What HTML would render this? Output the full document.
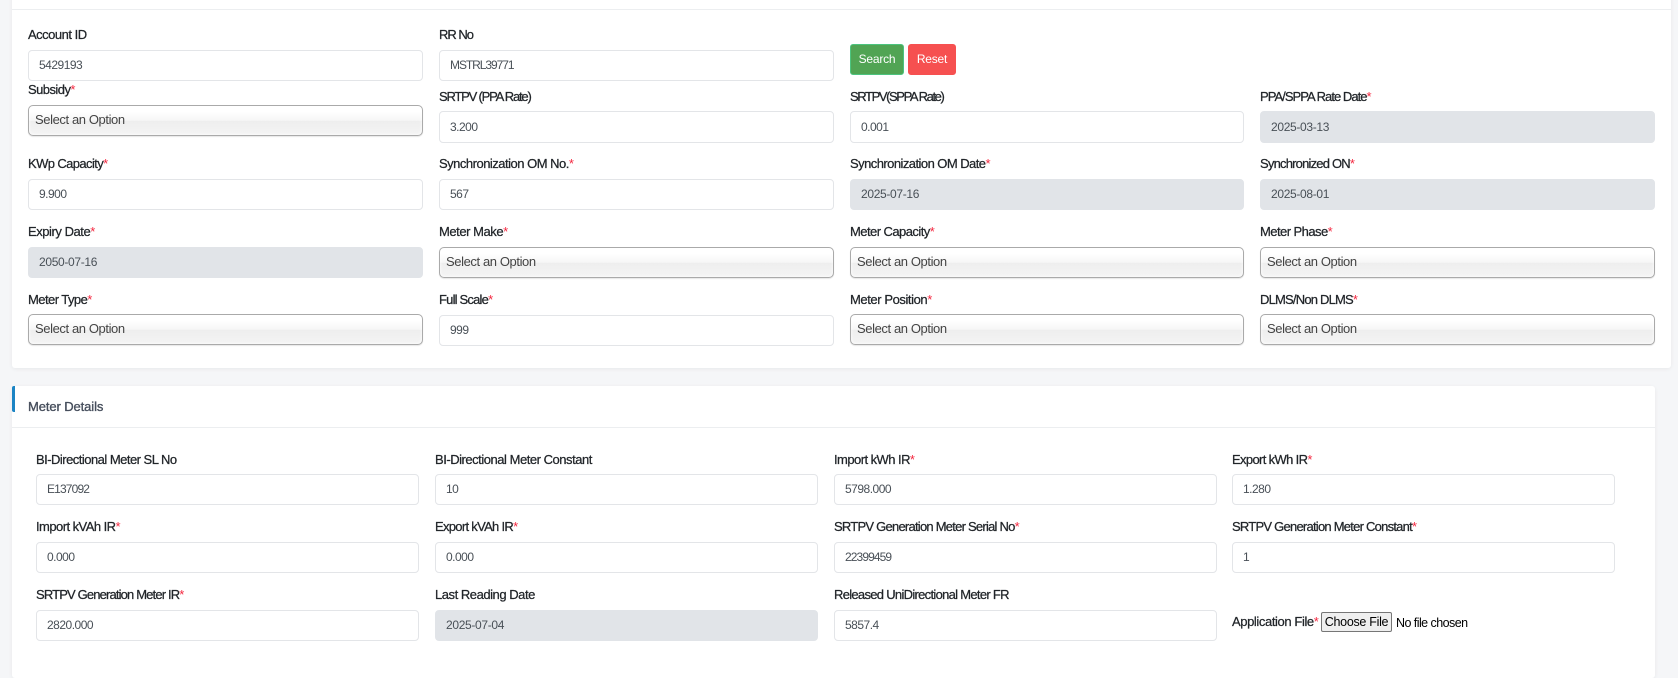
<!DOCTYPE html>
<html lang="en">
<head>
<meta charset="utf-8">
<title>Meter Details</title>
<style>
html,body{margin:0;padding:0;width:1678px;height:676px;overflow:hidden;background:#f5f6f8;font-family:"Liberation Sans",sans-serif}
.card{position:absolute;background:#fff;border-radius:3px;box-shadow:0 1px 4px rgba(0,0,0,.06)}
.hr{position:absolute;height:1px;background:#eceef0}
.l{position:absolute;font-size:13px;line-height:16px;height:16px;white-space:nowrap;color:#212529;letter-spacing:-.4px;-webkit-text-stroke:.25px #212529}
.l b{font-weight:normal;color:#f4263e;-webkit-text-stroke:0;letter-spacing:0}
.i,.r{position:absolute;box-sizing:border-box;height:31px;line-height:29px;padding-left:10px;font-size:12px;letter-spacing:-.5px;color:#495057;border:1px solid #e3e5e8;border-radius:4px;background:#fff;white-space:nowrap}
.r{background:#e1e4e8;border-color:#e1e4e8;letter-spacing:-.33px}
.s{position:absolute;box-sizing:border-box;height:31px;line-height:27px;padding-left:6px;font-size:13px;letter-spacing:-.4px;color:#444;border:1px solid #aaa;border-radius:5px;background:linear-gradient(#fff 20%,#f6f6f6 50%,#eee 52%,#f4f4f4 100%);box-shadow:inset 0 0 3px #fff,0 1px 1px rgba(0,0,0,.1);white-space:nowrap}
.c1{width:395px}.c2{width:395px}.c3{width:394px}.c4{width:395px}
.m{width:383px}
.btn{position:absolute;box-sizing:border-box;top:44px;height:31px;line-height:29px;text-align:center;color:#fff;font-size:12px;letter-spacing:-.2px;border-radius:3px}
</style>
</head>
<body>
<div class="card" style="left:12px;top:-20px;width:1659px;height:388px"></div>
<div class="hr" style="left:12px;top:9px;width:1659px"></div>

<div class="l" style="left:28px;top:27px;letter-spacing:-.5px">Account ID</div>
<div class="i c1" style="left:28px;top:50px">5429193</div>
<div class="l" style="left:439px;top:27px;letter-spacing:-1.0px">RR No</div>
<div class="i c2" style="left:439px;top:50px;letter-spacing:-1.05px">MSTRL39771</div>
<div class="btn" style="left:850px;width:54px;background:#51a454;border:1px solid #4cc47f">Search</div>
<div class="btn" style="left:908px;width:48px;background:#f65050;border:1px solid #f65050">Reset</div>

<div class="l" style="left:28px;top:82px;letter-spacing:-.55px">Subsidy<b>*</b></div>
<div class="s c1" style="left:28px;top:105px">Select an Option</div>
<div class="l" style="left:439px;top:89px;letter-spacing:-1.2px">SRTPV (PPA Rate)</div>
<div class="i c2" style="left:439px;top:111px;height:32px;line-height:30px">3.200</div>
<div class="l" style="left:850px;top:89px;letter-spacing:-1.4px">SRTPV(SPPA Rate)</div>
<div class="i c3" style="left:850px;top:111px;height:32px;line-height:30px">0.001</div>
<div class="l" style="left:1260px;top:89px;letter-spacing:-.96px">PPA/SPPA Rate Date<b>*</b></div>
<div class="r c4" style="left:1260px;top:111px;height:32px;line-height:30px">2025-03-13</div>

<div class="l" style="left:28px;top:156px;letter-spacing:-.6px">KWp Capacity<b>*</b></div>
<div class="i c1" style="left:28px;top:179px">9.900</div>
<div class="l" style="left:439px;top:156px;letter-spacing:-.5px">Synchronization OM No.<b>*</b></div>
<div class="i c2" style="left:439px;top:179px">567</div>
<div class="l" style="left:850px;top:156px;letter-spacing:-.55px">Synchronization OM Date<b>*</b></div>
<div class="r c3" style="left:850px;top:179px">2025-07-16</div>
<div class="l" style="left:1260px;top:156px;letter-spacing:-.8px">Synchronized ON<b>*</b></div>
<div class="r c4" style="left:1260px;top:179px">2025-08-01</div>

<div class="l" style="left:28px;top:224px;letter-spacing:-.45px">Expiry Date<b>*</b></div>
<div class="r c1" style="left:28px;top:247px">2050-07-16</div>
<div class="l" style="left:439px;top:224px;letter-spacing:-.45px">Meter Make<b>*</b></div>
<div class="s c2" style="left:439px;top:247px">Select an Option</div>
<div class="l" style="left:850px;top:224px;letter-spacing:-.55px">Meter Capacity<b>*</b></div>
<div class="s c3" style="left:850px;top:247px">Select an Option</div>
<div class="l" style="left:1260px;top:224px;letter-spacing:-.55px">Meter Phase<b>*</b></div>
<div class="s c4" style="left:1260px;top:247px">Select an Option</div>

<div class="l" style="left:28px;top:292px;letter-spacing:-.55px">Meter Type<b>*</b></div>
<div class="s c1" style="left:28px;top:314px">Select an Option</div>
<div class="l" style="left:439px;top:292px;letter-spacing:-.8px">Full Scale<b>*</b></div>
<div class="i c2" style="left:439px;top:315px">999</div>
<div class="l" style="left:850px;top:292px;letter-spacing:-.42px">Meter Position<b>*</b></div>
<div class="s c3" style="left:850px;top:314px">Select an Option</div>
<div class="l" style="left:1260px;top:292px;letter-spacing:-.8px">DLMS/Non DLMS<b>*</b></div>
<div class="s c4" style="left:1260px;top:314px">Select an Option</div>

<div class="card" style="left:12px;top:386px;width:1643px;height:292px"></div>
<div style="position:absolute;left:12px;top:386px;width:3px;height:26px;background:#1b84c4;border-radius:2px 0 0 2px"></div>
<div style="position:absolute;left:28px;top:399px;font-size:13px;line-height:16px;color:#464e5c;letter-spacing:-.1px;-webkit-text-stroke:.35px #464e5c">Meter Details</div>
<div class="hr" style="left:12px;top:427px;width:1643px"></div>

<div class="l" style="left:36px;top:452px;letter-spacing:-.52px">BI-Directional Meter SL No</div>
<div class="i m" style="left:36px;top:474px;letter-spacing:-.85px">E137092</div>
<div class="l" style="left:435px;top:452px;letter-spacing:-.47px">BI-Directional Meter Constant</div>
<div class="i m" style="left:435px;top:474px">10</div>
<div class="l" style="left:834px;top:452px;letter-spacing:-.55px">Import kWh IR<b>*</b></div>
<div class="i m" style="left:834px;top:474px">5798.000</div>
<div class="l" style="left:1232px;top:452px;letter-spacing:-.65px">Export kWh IR<b>*</b></div>
<div class="i m" style="left:1232px;top:474px">1.280</div>

<div class="l" style="left:36px;top:519px;letter-spacing:-.55px">Import kVAh IR<b>*</b></div>
<div class="i m" style="left:36px;top:542px">0.000</div>
<div class="l" style="left:435px;top:519px;letter-spacing:-.7px">Export kVAh IR<b>*</b></div>
<div class="i m" style="left:435px;top:542px">0.000</div>
<div class="l" style="left:834px;top:519px;letter-spacing:-.76px">SRTPV Generation Meter Serial No<b>*</b></div>
<div class="i m" style="left:834px;top:542px;letter-spacing:-.9px">22399459</div>
<div class="l" style="left:1232px;top:519px;letter-spacing:-.76px">SRTPV Generation Meter Constant<b>*</b></div>
<div class="i m" style="left:1232px;top:542px">1</div>

<div class="l" style="left:36px;top:587px;letter-spacing:-.85px">SRTPV Generation Meter IR<b>*</b></div>
<div class="i m" style="left:36px;top:610px">2820.000</div>
<div class="l" style="left:435px;top:587px;letter-spacing:-.46px">Last Reading Date</div>
<div class="r m" style="left:435px;top:610px">2025-07-04</div>
<div class="l" style="left:834px;top:587px;letter-spacing:-.7px">Released UniDirectional Meter FR</div>
<div class="i m" style="left:834px;top:610px">5857.4</div>
<div class="l" style="left:1232px;top:614px;letter-spacing:-.4px">Application File<b>*</b></div>
<div style="position:absolute;box-sizing:border-box;left:1321px;top:612px;width:71px;height:20px;line-height:18px;text-align:center;font-size:12.5px;letter-spacing:-.3px;color:#000;background:#efefef;border:1px solid #767676;border-radius:2px;white-space:nowrap">Choose File</div>
<div style="position:absolute;left:1396px;top:615px;font-size:12.5px;line-height:16px;letter-spacing:-.55px;color:#000;white-space:nowrap">No file chosen</div>
</body>
</html>
